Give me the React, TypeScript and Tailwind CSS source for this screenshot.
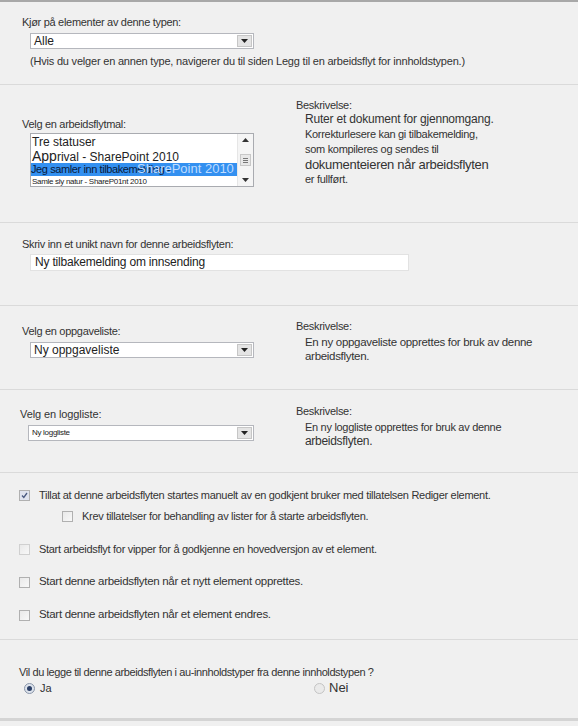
import React from 'react';

const font = { fontFamily: '"Liberation Sans", Arial, sans-serif' };

function Arrow() {
  return (
    <svg width="7" height="4" viewBox="0 0 7 4">
      <path d="M0 0h7L3.5 4z" fill="#222" />
    </svg>
  );
}

function Select({ value, small, width = 'w-[224px]' }: { value: string; small?: boolean; width?: string }) {
  return (
    <div className={`${width} h-[16px] bg-white border border-[#b5b7bd] flex items-stretch`}>
      <div className={`flex-1 pl-[3px] flex items-center ${small ? 'text-[8px] tracking-[-0.3px]' : 'text-[12px]'} text-[#222]`}>
        {value}
      </div>
      <div className="w-[15px] my-[1px] mr-[1px] bg-[#e4e4e4] border border-[#c6c6c6] flex items-center justify-center">
        <Arrow />
      </div>
    </div>
  );
}

function Check({ checked, faint }: { checked?: boolean; faint?: boolean }) {
  return (
    <div
      className={`w-[11px] h-[11px] border ${faint ? 'border-[#d0d0d0]' : 'border-[#b0b0b0]'} ${
        checked ? 'bg-[#dfe3ee]' : 'bg-gradient-to-br from-[#e9e9e9] to-[#f8f8f8]'
      } flex items-center justify-center shrink-0`}
    >
      {checked && (
        <svg width="7" height="7" viewBox="0 0 7 7">
          <path d="M1 3.5l1.8 2L6 1" stroke="#4a5a80" strokeWidth="1.3" fill="none" />
        </svg>
      )}
    </div>
  );
}

function Radio({ on }: { on?: boolean }) {
  return (
    <div
      className={`w-[11px] h-[11px] rounded-full border ${on ? 'border-[#8a96aa] bg-[#dde3ec]' : 'border-[#c4c4c4] bg-[#eaeaea]'} flex items-center justify-center shrink-0`}
    >
      {on && <div className="w-[5px] h-[5px] rounded-full bg-[#2b3f66]" />}
    </div>
  );
}

function Desc({ children }: { children: React.ReactNode }) {
  return (
    <div className="text-[#333]">
      <div className="text-[11px] leading-[14px] tracking-[-0.3px]">Beskrivelse:</div>
      <div className="pl-[9px]">{children}</div>
    </div>
  );
}

export default function App() {
  return (
    <div className="w-[578px] h-[726px] bg-[#f0f0f0] text-[#333] overflow-hidden" style={font}>
      <div className="h-[2px] bg-[#a8a8a8]" />

      {/* type */}
      <div className="h-[83px] border-b border-[#dadada] pt-[13px] pl-[22px]">
        <div className="text-[11px] leading-[14px] tracking-[-0.3px]">Kjør på elementer av denne typen:</div>
        <div className="pl-[8px] mt-[4px]">
          <Select value="Alle" />
          <div className="text-[11px] leading-[14px] tracking-[-0.2px] mt-[5px]">
            (Hvis du velger en annen type, navigerer du til siden Legg til en arbeidsflyt for innholdstypen.)
          </div>
        </div>
      </div>

      {/* template */}
      <div className="h-[138px] border-b border-[#dadada] flex">
        <div className="w-[274px] pl-[22px] pt-[32px]">
          <div className="text-[11px] leading-[14px] tracking-[-0.3px]">Velg en arbeidsflytmal:</div>
          <div className="ml-[8px] mt-[2px] w-[224px] h-[54px] bg-white border border-[#a9abb0] flex">
            <div className="flex-1 pt-[1px]">
              <div className="h-[14px] leading-[14px] text-[12px] pl-[1px] text-[#222]">Tre statuser</div>
              <div className="h-[14px] leading-[14px] text-[12px] pl-[1px] text-[#222]">
                <span className="text-[14px]">App</span>rival - SharePoint 2010
              </div>
              <div className="relative h-[13px] bg-[#3390f0] leading-[13px] text-[11px] tracking-[-0.4px] text-[#0a1a3a] whitespace-nowrap">
                Jeg samler inn tilbakemelding -
                <span className="absolute left-[106px] top-[-1px] leading-[14px] text-[13px] text-[#bfdcff] tracking-[0px] whitespace-nowrap">
                  SharePoint 2010
                </span>
              </div>
              <div className="h-[12px] leading-[12px] text-[8px] tracking-[-0.3px] pl-[1px] text-[#222] whitespace-nowrap">
                Samle sly natur - ShareP01nt 2010
              </div>
            </div>
            <div className="w-[16px] border-l border-[#e6e6e6] bg-[#f5f5f5] flex flex-col items-center justify-between py-[4px]">
              <svg width="7" height="4" viewBox="0 0 7 4"><path d="M0 4h7L3.5 0z" fill="#333" /></svg>
              <div className="w-[11px] h-[12px] border border-[#c8c8c8] bg-[#e8e8e8] flex flex-col items-center justify-center gap-[1px]">
                <div className="w-[5px] h-px bg-[#777]" />
                <div className="w-[5px] h-px bg-[#777]" />
                <div className="w-[5px] h-px bg-[#777]" />
              </div>
              <svg width="7" height="4" viewBox="0 0 7 4"><path d="M0 0h7L3.5 4z" fill="#333" /></svg>
            </div>
          </div>
        </div>
        <div className="pl-[22px] pt-[13px]">
          <Desc>
            <div className="text-[12px] leading-[15px] tracking-[-0.2px]">Ruter et dokument for gjennomgang.</div>
            <div className="text-[11px] leading-[15px] tracking-[-0.3px]">Korrekturlesere kan gi tilbakemelding,</div>
            <div className="text-[11px] leading-[15px] tracking-[-0.3px]">som kompileres og sendes til</div>
            <div className="text-[13px] leading-[15px] tracking-[-0.3px]">dokumenteieren når arbeidsflyten</div>
            <div className="text-[11px] leading-[15px] tracking-[-0.3px]">er fullført.</div>
          </Desc>
        </div>
      </div>

      {/* name */}
      <div className="h-[83px] border-b border-[#dadada] pt-[14px] pl-[22px]">
        <div className="text-[11px] leading-[14px] tracking-[-0.3px]">Skriv inn et unikt navn for denne arbeidsflyten:</div>
        <div className="ml-[8px] mt-[3px] w-[379px] h-[17px] bg-white border border-[#e2e2e2] pl-[4px] text-[12px] leading-[15px] tracking-[-0.2px] text-[#222]">
          Ny tilbakemelding om innsending
        </div>
      </div>

      {/* task list */}
      <div className="h-[84px] border-b border-[#dadada] flex">
        <div className="w-[274px] pl-[22px] pt-[18px]">
          <div className="text-[11px] leading-[14px] tracking-[-0.3px]">Velg en oppgaveliste:</div>
          <div className="ml-[8px] mt-[4px]">
            <Select value="Ny oppgaveliste" />
          </div>
        </div>
        <div className="pl-[22px] pt-[13px]">
          <Desc>
            <div className="text-[11.5px] leading-[14px] tracking-[-0.3px] mt-[2px]">
              En ny oppgaveliste opprettes for bruk av denne
            </div>
            <div className="text-[11.5px] leading-[14px] tracking-[-0.3px]">arbeidsflyten.</div>
          </Desc>
        </div>
      </div>

      {/* log list */}
      <div className="h-[83px] border-b border-[#dadada] flex">
        <div className="w-[274px] pl-[20px] pt-[17px]">
          <div className="text-[11px] leading-[14px] tracking-[-0.1px]">Velg en loggliste:</div>
          <div className="ml-[8px] mt-[4px]">
            <Select value="Ny loggliste" small width="w-[226px]" />
          </div>
        </div>
        <div className="pl-[22px] pt-[14px]">
          <Desc>
            <div className="text-[11px] leading-[14px] tracking-[-0.3px] mt-[2px]">
              En ny loggliste opprettes for bruk av denne
            </div>
            <div className="text-[12px] leading-[14px] tracking-[-0.3px]">arbeidsflyten.</div>
          </Desc>
        </div>
      </div>

      {/* options */}
      <div className="h-[167px] border-b border-[#dadada] pl-[19px] pt-[15px] text-[11px] tracking-[-0.3px]">
        <div className="flex items-center gap-[9px] h-[14px]">
          <Check checked />
          <span>Tillat at denne arbeidsflyten startes manuelt av en godkjent bruker med tillatelsen Rediger element.</span>
        </div>
        <div className="flex items-center gap-[9px] h-[14px] mt-[7px] pl-[43px]">
          <Check />
          <span>Krev tillatelser for behandling av lister for å starte arbeidsflyten.</span>
        </div>
        <div className="flex items-center gap-[9px] h-[14px] mt-[19px]">
          <Check faint />
          <span>Start arbeidsflyt for vipper for å godkjenne en hovedversjon av et element.</span>
        </div>
        <div className="flex items-center gap-[9px] h-[14px] mt-[19px]">
          <Check />
          <span className="text-[11.5px]">Start denne arbeidsflyten når et nytt element opprettes.</span>
        </div>
        <div className="flex items-center gap-[9px] h-[14px] mt-[19px]">
          <Check />
          <span className="text-[11.5px]">Start denne arbeidsflyten når et element endres.</span>
        </div>
      </div>

      {/* content types */}
      <div className="h-[81px] border-b-[3px] border-[#d4d4d4] pl-[19px] pt-[25px]">
        <div className="text-[11px] leading-[14px] tracking-[-0.4px]">
          Vil du legge til denne arbeidsflyten i au-innholdstyper fra denne innholdstypen ?
        </div>
        <div className="flex mt-[2px] h-[14px] items-center">
          <div className="w-[295px] pl-[5px] flex items-center gap-[5px]">
            <Radio on />
            <span className="text-[11px]">Ja</span>
          </div>
          <div className="flex items-center gap-[4px]">
            <Radio />
            <span className="text-[13px]">Nei</span>
          </div>
        </div>
      </div>
    </div>
  );
}
